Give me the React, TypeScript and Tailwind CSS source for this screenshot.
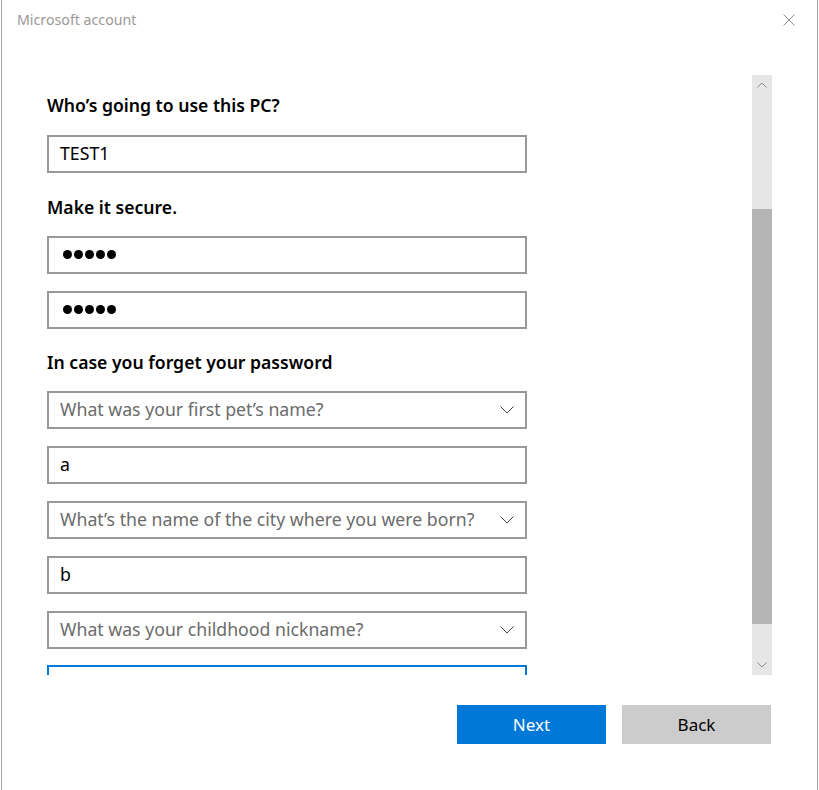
import { ReactNode } from 'react'

function Label({ children }: { children: ReactNode }) {
  return <div className="h-[24px] flex items-center text-[17.6px] font-semibold text-black leading-none">{children}</div>
}

function Field({ children, blue }: { children?: ReactNode; blue?: boolean }) {
  return (
    <div className={`w-[480px] h-[38px] shrink-0 border-2 ${blue ? 'border-[#0078d7]' : 'border-[#999999]'} bg-white flex items-center pl-[11px] pr-[10px] text-[17.7px] text-black`}>
      {children}
    </div>
  )
}

function Dots() {
  return (
    <div className="flex gap-[2px] pl-[3px]">
      {[0, 1, 2, 3, 4].map(i => (
        <div key={i} className="w-[9px] h-[9px] rounded-full bg-black" />
      ))}
    </div>
  )
}

function Select({ text }: { text: string }) {
  return (
    <Field>
      <span className="flex-1 text-[#6b6b6b] whitespace-nowrap">{text}</span>
      <svg width="14" height="8" viewBox="0 0 14 8" className="mr-[1px]">
        <polyline points="0.5,0.5 7,7 13.5,0.5" fill="none" stroke="#444" strokeWidth="1" />
      </svg>
    </Field>
  )
}

export default function App() {
  return (
    <div className="w-[819px] h-[790px] bg-white flex font-['Noto_Sans',sans-serif] overflow-hidden">
      <div className="w-px" />
      <div className="w-[817px] border-x border-[#a6a6a6] flex flex-col">
        {/* barra de titulo */}
        <div className="h-[40px] flex items-center pl-[15px] pr-[22px]">
          <span className="flex-1 text-[14.2px] text-[#999999]">Microsoft account</span>
          <svg width="12" height="12" viewBox="0 0 12 12">
            <path d="M0.5 0.5 L11.5 11.5 M11.5 0.5 L0.5 11.5" stroke="#8a8a8a" strokeWidth="1" />
          </svg>
        </div>

        <div className="mt-[35px] h-[600px] flex">
          <div className="w-[750px] overflow-hidden pl-[45px] pt-[22px] flex flex-col">
            <Label>Who’s going to use this PC?</Label>
            <div className="mt-[20px]"><Field>TEST1</Field></div>

            <div className="mt-[23px]"><Label>Make it secure.</Label></div>
            <div className="mt-[16px]"><Field><Dots /></Field></div>
            <div className="mt-[17px]"><Field><Dots /></Field></div>

            <div className="mt-[22px]"><Label>In case you forget your password</Label></div>
            <div className="mt-[16px]"><Select text="What was your first pet’s name?" /></div>
            <div className="mt-[17px]"><Field>a</Field></div>
            <div className="mt-[17px]"><Select text="What’s the name of the city where you were born?" /></div>
            <div className="mt-[17px]"><Field>b</Field></div>
            <div className="mt-[17px]"><Select text="What was your childhood nickname?" /></div>
            <div className="mt-[16px]"><Field blue /></div>
          </div>

          {/* barra de rolagem */}
          <div className="w-[20px] bg-[#e6e6e6] flex flex-col">
            <div className="h-[20px] flex items-center justify-center">
              <svg width="10" height="6" viewBox="0 0 10 6">
                <polyline points="0.5,5.5 5,1 9.5,5.5" fill="none" stroke="#8c8c8c" strokeWidth="1" />
              </svg>
            </div>
            <div className="h-[114px]" />
            <div className="h-[415px] bg-[#b4b4b4]" />
            <div className="flex-1 flex items-end justify-center pb-[7px]">
              <svg width="10" height="6" viewBox="0 0 10 6">
                <polyline points="0.5,0.5 5,5 9.5,0.5" fill="none" stroke="#8c8c8c" strokeWidth="1" />
              </svg>
            </div>
          </div>
        </div>

        <div className="mt-[30px] flex justify-end gap-[16px] pr-[46px]">
          <button className="w-[149px] h-[39px] bg-[#0078d7] text-white text-[17px]">Next</button>
          <button className="w-[149px] h-[39px] bg-[#cccccc] text-black text-[17px]">Back</button>
        </div>
      </div>
    </div>
  )
}
